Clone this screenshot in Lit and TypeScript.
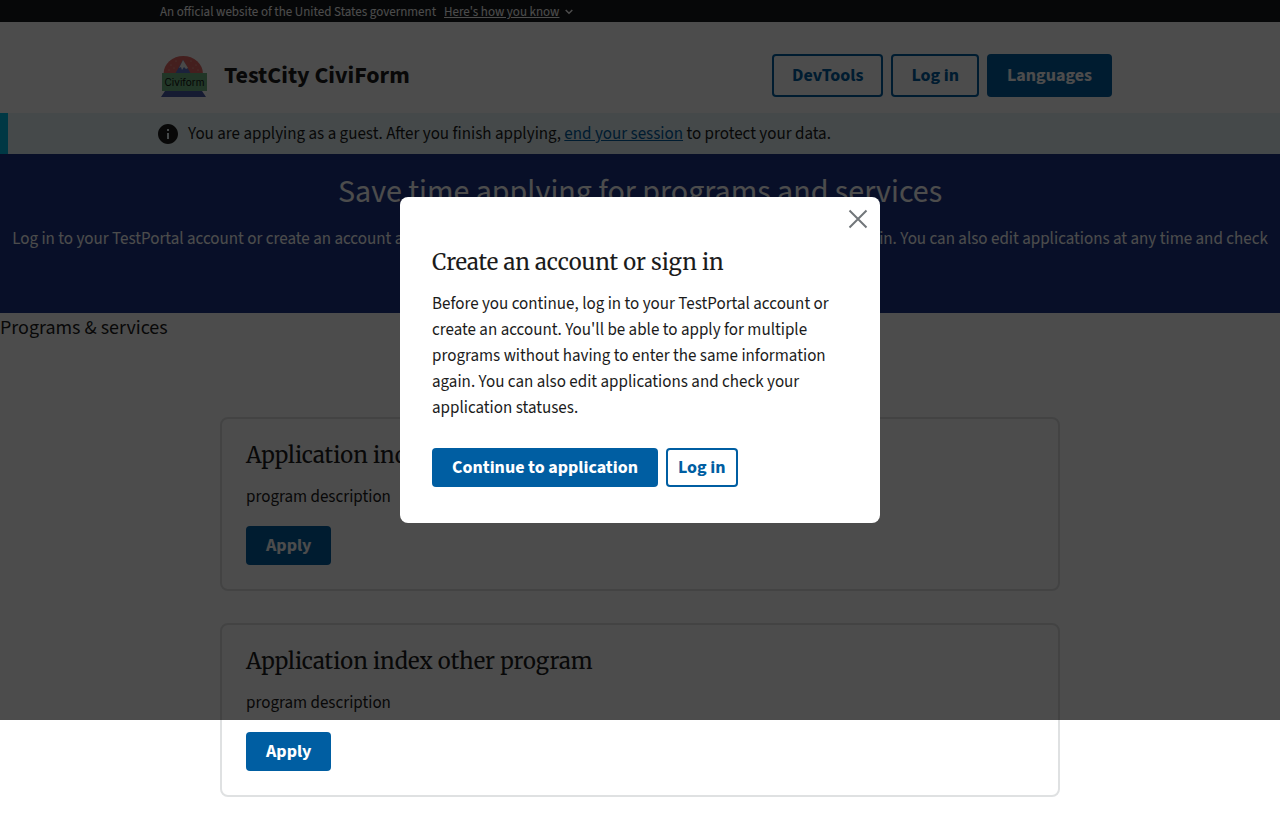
import { LitElement, html, css, svg } from "lit";
import { customElement, property, state } from "lit/decorators.js";

const SANS = css`"Source Sans 3", "Source Sans Pro", "Noto Sans CJK SC", "Open Sans", sans-serif`;
const SERIF = css`"Merriweather", "DejaVu Serif", serif`;

const buttonStyles = css`
  .button {
    box-sizing: border-box;
    display: inline-block;
    margin: 0;
    padding: 8px 20px;
    border: 0;
    border-radius: 4px;
    background: #005ea2;
    color: #fff;
    font-family: ${SANS};
    font-size: 18px;
    font-weight: 700;
    line-height: 23px;
    white-space: nowrap;
    cursor: pointer;
  }
  .button.outline {
    background: transparent;
    color: #005ea2;
    box-shadow: inset 0 0 0 2px #005ea2;
  }
  .button.large {
    padding: 10px 20px;
  }
  .button.compact {
    padding: 8px 12px;
  }
`;

@customElement("program-card")
export class ProgramCard extends LitElement {
  static styles = [
    buttonStyles,
    css`
      :host {
        display: block;
      }
      .card {
        display: flex;
        flex-direction: column;
        align-items: flex-start;
        gap: 16px;
        padding: 24px;
        border: 2px solid #dfe1e2;
        border-radius: 8px;
        background: #fff;
      }
      .title {
        margin: 0;
        font-family: ${SERIF};
        font-size: 22px;
        font-weight: 400;
        line-height: 25px;
      }
      .description {
        margin: 0;
        font-size: 17px;
        line-height: 26px;
      }
    `,
  ];

  @property() heading = "";
  @property() description = "";

  render() {
    return html`
      <article class="card">
        <h3 class="title">${this.heading}</h3>
        <p class="description">${this.description}</p>
        <button class="button" type="button">Apply</button>
      </article>
    `;
  }
}

const logo = svg`
  <path d="M2.500 19a19.750 18 0 0 1 39.500 0z" fill="#e36a66"/>
  <g fill="#f3c0b8">
    <circle cx="10" cy="10" r=".6"/><circle cx="15" cy="6" r=".6"/>
    <circle cx="8" cy="15" r=".6"/><circle cx="13" cy="13" r=".6"/>
    <circle cx="30" cy="6" r=".6"/><circle cx="35" cy="10" r=".6"/>
    <circle cx="32" cy="13" r=".6"/><circle cx="37" cy="15" r=".6"/>
  </g>
  <path d="M14 19 22 5l8 14z" fill="#5b74c8"/>
  <path d="M22 5l5 8-2 1-2-2-2 3-1-3-2 1z" fill="#f4f4f4"/>
  <path d="M1 18h45v18H1z" fill="#6fb483"/>
  <path d="M4 36h37l4 6H0z" fill="#4a5aa8"/>
  <text x="23.500" y="31" text-anchor="middle" font-family="Inter, sans-serif" font-size="10" font-weight="400" fill="#111">Civiform</text>
`;

@customElement("app-root")
export class AppRoot extends LitElement {
  static styles = [
    buttonStyles,
    css`
      :host {
        display: block;
        position: relative;
        min-height: 100vh;
        background: #fff;
        color: #1b1b1b;
        font-family: ${SANS};
        font-size: 17px;
        line-height: 26px;
      }
      .container {
        box-sizing: border-box;
        max-width: 1024px;
        margin: 0 auto;
        padding: 0 32px;
      }
      .banner {
        padding-top: 2px;
        background: #16181c;
        color: #fff;
        font-size: 13px;
        line-height: 20px;
      }
      .banner-row {
        display: flex;
        align-items: center;
        gap: 8px;
      }
      .banner-toggle {
        display: flex;
        align-items: center;
        gap: 6px;
        margin: 0;
        padding: 0;
        border: 0;
        background: none;
        color: inherit;
        font: inherit;
        cursor: pointer;
      }
      .banner-label {
        text-decoration: underline;
      }
      .header-row {
        display: flex;
        align-items: center;
        justify-content: space-between;
        padding: 32px 40px 16px 32px;
      }
      .brand {
        display: flex;
        align-items: center;
        gap: 16px;
        color: inherit;
        text-decoration: none;
        font-size: 24px;
        font-weight: 700;
      }
      .actions {
        display: flex;
        gap: 8px;
      }
      .alert {
        border-left: 8px solid #00bde3;
        background: #e7f6f8;
      }
      .alert-row {
        display: flex;
        align-items: center;
        gap: 10px;
        max-width: 1024px;
        margin: 0 auto;
        box-sizing: border-box;
        padding: 8px 26px 7px;
      }
      .alert-text {
        margin: 0;
      }
      .link {
        color: #005ea2;
      }
      .hero {
        padding: 17px 8px 35px;
        background: #1b3585;
        color: #fff;
        text-align: center;
      }
      .hero-title {
        margin: 0 0 12px;
        font-size: 32px;
        font-weight: 400;
        line-height: 43px;
      }
      .hero-text {
        margin: 0;
      }
      .section-title {
        margin: 0;
        font-size: 20px;
        font-weight: 400;
        line-height: 30px;
      }
      .cards {
        display: grid;
        gap: 32px;
        max-width: 840px;
        margin: 74px auto 32px;
      }
      .overlay {
        position: absolute;
        inset: 0 0 auto;
        height: 720px;
        display: flex;
        align-items: center;
        justify-content: center;
        background: rgba(0, 0, 0, 0.7);
      }
      .modal {
        position: relative;
        box-sizing: border-box;
        width: 480px;
        max-width: 100%;
        padding: 52px 32px 36px;
        border-radius: 8px;
        background: #fff;
      }
      .close {
        position: absolute;
        top: 6px;
        right: 6px;
        display: flex;
        padding: 0;
        border: 0;
        background: none;
        color: #71767a;
        cursor: pointer;
      }
      .modal-title {
        margin: 0 0 16px;
        font-family: ${SERIF};
        font-size: 22px;
        font-weight: 400;
        line-height: 26px;
      }
      .modal-text {
        margin: 0 0 27px;
      }
      .modal-actions {
        display: flex;
        gap: 8px;
      }
    `,
  ];

  @state() private modalOpen = true;

  private closeModal() {
    this.modalOpen = false;
  }

  render() {
    return html`
      <div class="banner">
        <div class="container banner-row">
          <span>An official website of the United States government</span>
          <button class="banner-toggle" type="button">
            <span class="banner-label">Here's how you know</span>
            <svg width="8" height="6" viewBox="0 0 8 6" fill="none" stroke="currentColor" stroke-width="1.500" aria-hidden="true">
              <path d="M.7 1 4 4.300 7.300 1" />
            </svg>
          </button>
        </div>
      </div>

      <header class="container header-row">
        <a class="brand" href="#">
          <svg width="48" height="42" viewBox="-1 0 48 42" aria-hidden="true">${logo}</svg>
          <span>TestCity CiviForm</span>
        </a>
        <nav class="actions">
          <button class="button outline large" type="button">DevTools</button>
          <button class="button outline large" type="button">Log in</button>
          <button class="button large" type="button">Languages</button>
        </nav>
      </header>

      <div class="alert">
        <div class="alert-row">
          <svg width="20" height="20" viewBox="2 2 20 20" fill="#1b1b1b" aria-hidden="true">
            <path d="M12 2C6.480 2 2 6.480 2 12s4.480 10 10 10 10-4.480 10-10S17.520 2 12 2zm1 15h-2v-6h2v6zm0-8h-2V7h2v2z" />
          </svg>
          <p class="alert-text">
            You are applying as a guest. After you finish applying,
            <a class="link" href="#">end your session</a> to protect your data.
          </p>
        </div>
      </div>

      <main>
        <section class="hero">
          <h1 class="hero-title">Save time applying for programs and services</h1>
          <p class="hero-text">
            Log in to your TestPortal account or create an account and you'll save time by not having to
            enter the same information again. You can also edit applications at any time and check
            application statuses.
          </p>
        </section>
        <h2 class="section-title">Programs &amp; services</h2>
        <div class="cards">
          <program-card heading="Application index program" description="program description"></program-card>
          <program-card heading="Application index other program" description="program description"></program-card>
        </div>
      </main>

      ${this.modalOpen
        ? html`
            <div class="overlay">
              <div class="modal" role="dialog" aria-modal="true" aria-labelledby="modal-title">
                <button class="close" type="button" aria-label="Close" @click=${this.closeModal}>
                  <svg width="32" height="32" viewBox="0 0 32 32" fill="none" stroke="currentColor" stroke-width="2" aria-hidden="true">
                    <path d="M7.500 7.500l17 17M24.500 7.500l-17 17" />
                  </svg>
                </button>
                <h2 class="modal-title" id="modal-title">Create an account or sign in</h2>
                <p class="modal-text">
                  Before you continue, log in to your TestPortal account or create an account. You'll be
                  able to apply for multiple programs without having to enter the same information again.
                  You can also edit applications and check your application statuses.
                </p>
                <div class="modal-actions">
                  <button class="button" type="button">Continue to application</button>
                  <button class="button outline compact" type="button">Log in</button>
                </div>
              </div>
            </div>
          `
        : null}
    `;
  }
}
